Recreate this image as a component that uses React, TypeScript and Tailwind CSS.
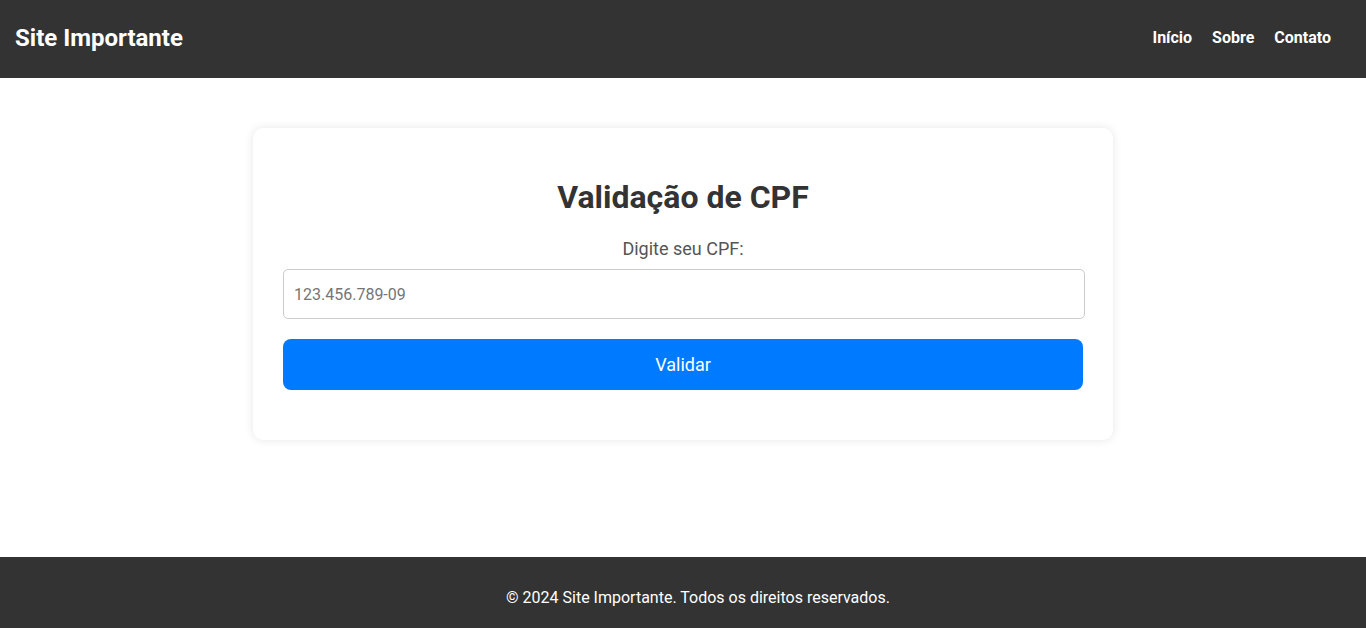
import { useState } from 'react';

const navLinks = ['Início', 'Sobre', 'Contato'];

export default function App() {
  const [cpf, setCpf] = useState('');

  return (
    <div className="flex min-h-screen flex-col bg-white font-['Roboto',sans-serif] text-[#333]">
      <header className="flex h-[78px] items-center justify-between bg-[#333] pb-[2px] pl-[15px] pr-[35px] text-white">
        <h1 className="text-[24px] font-bold leading-none">Site Importante</h1>
        <nav className="flex gap-5">
          {navLinks.map((link) => (
            <a key={link} href="#" className="text-[16px] font-bold text-white">
              {link}
            </a>
          ))}
        </nav>
      </header>

      <main className="flex flex-1 justify-center pt-[50px]">
        <div className="h-fit w-[860px] rounded-[10px] bg-white p-[30px] pb-[50px] shadow-[0_0_10px_rgba(0,0,0,0.1)]">
          <h2 className="my-[21.44px] text-center text-[32px] font-bold leading-[37.5px] text-[#333]">
            Validação de CPF
          </h2>
          <label htmlFor="cpf" className="mb-[10px] block text-center text-[18px] leading-[21px] text-[#555]">
            Digite seu CPF:
          </label>
          <input
            id="cpf"
            type="text"
            value={cpf}
            onChange={(e) => setCpf(e.target.value)}
            placeholder="123.456.789-09"
            className="block h-[50px] w-[802px] rounded-[5px] border border-[#ccc] px-[10px] text-[16px] text-[#333] outline-none placeholder:text-[#757575]"
          />
          <button className="mt-5 block h-[51px] w-full rounded-[8px] bg-[#007bff] text-[18px] text-white">
            Validar
          </button>
        </div>
      </main>

      <footer className="h-[71px] bg-[#333] pl-[30px] pt-[31px] text-center text-[16px] leading-[19px] text-white">
        © 2024 Site Importante. Todos os direitos reservados.
      </footer>
    </div>
  );
}
